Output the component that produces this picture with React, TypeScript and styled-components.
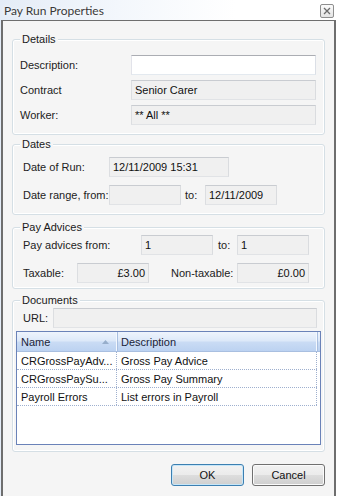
import styled, { createGlobalStyle } from "styled-components";

const GlobalStyle = createGlobalStyle`
  html, body {
    margin: 0;
    padding: 0;
    background: #ffffff;
  }
  body {
    font-family: "Liberation Sans", Arial, sans-serif;
    font-size: 11px;
    color: #1e1e1e;
  }
`;

const Window = styled.div`
  width: 337px;
  height: 496px;
  display: flex;
  flex-direction: column;
  box-sizing: border-box;
  background: linear-gradient(to right, #e4ecf7 0%, #f3f7fc 35%, #ffffff 70%);
`;

const TitleBar = styled.div`
  height: 20px;
  display: flex;
  align-items: center;
  justify-content: space-between;
  padding: 0 3px 0 4px;
`;

const Title = styled.span`
  font-family: Lato, "Liberation Sans", sans-serif;
  font-size: 12px;
  color: #3a3a3a;
  text-shadow: 0 0 4px #ffffff;
`;

const CloseBox = styled.div`
  width: 14px;
  height: 14px;
  box-sizing: border-box;
  border: 1px solid #8e8e8e;
  border-radius: 2px;
  background: linear-gradient(#fbfbfb, #e4e4e4);
  display: flex;
  align-items: center;
  justify-content: center;
  margin-top: 1px;
`;

const Frame = styled.div`
  flex: 1;
  margin: 0 1px;
  border: 2px solid #6e6e6e;
  border-top-width: 1px;
  border-bottom: none;
  background: #f5f5f5;
  padding: 11px 9px 0 9px;
  display: flex;
  flex-direction: column;
`;

const Group = styled.fieldset<{ $mt: number }>`
  margin: ${({ $mt }) => $mt}px 0 0;
  padding: 0;
  min-width: 0;
  border: 1px solid #d5dfe5;
  border-radius: 3px;
  box-shadow: inset 0 0 0 1px #ffffff;
`;

const Legend = styled.legend`
  margin-left: 7px;
  padding: 0 2px;
  font-size: 11px;
  line-height: 14px;
  color: #1a1a1a;
  background: #f5f5f5;
`;

const Content = styled.div<{ $pad: string; $gap: number }>`
  display: flex;
  flex-direction: column;
  gap: ${({ $gap }) => $gap}px;
  padding: ${({ $pad }) => $pad};
`;

const Row = styled.div`
  display: flex;
  align-items: center;
  height: 20px;
`;

const Label = styled.span<{ $w: number; $pl?: number }>`
  width: ${({ $w }) => $w}px;
  padding-left: ${({ $pl }) => $pl ?? 0}px;
  box-sizing: border-box;
  flex-shrink: 0;
  white-space: nowrap;
  color: #222222;
`;

const Field = styled.div<{ $w: number; $editable?: boolean; $right?: boolean }>`
  width: ${({ $w }) => $w}px;
  height: 20px;
  box-sizing: border-box;
  flex-shrink: 0;
  border: 1px solid;
  border-color: ${({ $editable }) =>
    $editable ? "#abadb3 #dbdfe6 #e3e9ef #e2e3ea" : "#c9ccd1 #dadcdf #e1e3e6 #dcdee1"};
  background: ${({ $editable }) => ($editable ? "#ffffff" : "#f0f0f0")};
  padding: 0 ${({ $right }) => ($right ? "3px" : "3px")};
  display: flex;
  align-items: center;
  justify-content: ${({ $right }) => ($right ? "flex-end" : "flex-start")};
  white-space: nowrap;
  overflow: hidden;
  color: #111111;
`;

const Grid = styled.div`
  margin-left: 3px;
  width: 305px;
  height: 114px;
  box-sizing: border-box;
  border: 1px solid #6a82b8;
  background: #ffffff;
`;

const HeadRow = styled.div`
  display: flex;
  height: 20px;
  box-sizing: border-box;
  background: linear-gradient(#eef4fd 0%, #dde9f9 45%, #c9dbf4 55%, #bcd2f1 100%);
  border-bottom: 1px solid #a9bfe0;
`;

const HeadCell = styled.div<{ $w: number }>`
  width: ${({ $w }) => $w}px;
  box-sizing: border-box;
  display: flex;
  align-items: center;
  justify-content: space-between;
  padding: 0 7px 0 4px;
  border-right: 1px solid #f4f8fe;
  box-shadow: 1px 0 0 #a9bfe0;
  color: #1b2438;
`;

const DataRow = styled.div`
  display: flex;
  height: 18px;
  box-sizing: border-box;
  border-bottom: 1px dotted #9fb0cf;
  width: 300px;
`;

const Cell = styled.div<{ $w: number }>`
  width: ${({ $w }) => $w}px;
  box-sizing: border-box;
  padding-left: 4px;
  display: flex;
  align-items: center;
  border-right: 1px dotted #9fb0cf;
  white-space: nowrap;
  overflow: hidden;
  color: #111111;
`;

const ButtonRow = styled.div`
  display: flex;
  justify-content: flex-end;
  gap: 8px;
  margin-top: 12px;
`;

const Button = styled.button<{ $default?: boolean }>`
  width: 73px;
  height: 22px;
  box-sizing: border-box;
  font-family: "Liberation Sans", Arial, sans-serif;
  font-size: 11px;
  color: #111111;
  border-radius: 3px;
  border: 1px solid ${({ $default }) => ($default ? "#3c7fb1" : "#707070")};
  box-shadow: inset 0 0 0 1px ${({ $default }) => ($default ? "#c6e6f8" : "#fbfbfb")};
  background: linear-gradient(#f2f2f2 0%, #ebebeb 50%, #dddddd 51%, #cfcfcf 100%);
  padding: 0;
`;

const docs = [
  { name: "CRGrossPayAdv...", desc: "Gross Pay Advice" },
  { name: "CRGrossPaySu...", desc: "Gross Pay Summary" },
  { name: "Payroll Errors", desc: "List errors in Payroll" },
];

export default function App() {
  return (
    <>
      <GlobalStyle />
      <Window>
        <TitleBar>
          <Title>Pay Run Properties</Title>
          <CloseBox>
            <svg width="8" height="8" viewBox="0 0 8 8">
              <path d="M1 1 L7 7 M7 1 L1 7" stroke="#6b6b6b" strokeWidth="1.3" />
            </svg>
          </CloseBox>
        </TitleBar>
        <Frame>
          <Group $mt={0}>
            <Legend>Details</Legend>
            <Content $pad="9px 0 9px 7px" $gap={5}>
              <Row>
                <Label $w={111}>Description:</Label>
                <Field $w={185} $editable />
              </Row>
              <Row>
                <Label $w={111}>Contract</Label>
                <Field $w={185}>Senior Carer</Field>
              </Row>
              <Row>
                <Label $w={111}>Worker:</Label>
                <Field $w={185}>** All **</Field>
              </Row>
            </Content>
          </Group>

          <Group $mt={2}>
            <Legend>Dates</Legend>
            <Content $pad="6px 0 9px 10px" $gap={8}>
              <Row>
                <Label $w={86}>Date of Run:</Label>
                <Field $w={120}>12/11/2009 15:31</Field>
              </Row>
              <Row>
                <Label $w={86}>Date range, from:</Label>
                <Field $w={72} />
                <Label $w={24} $pl={4}>to:</Label>
                <Field $w={72}>12/11/2009</Field>
              </Row>
            </Content>
          </Group>

          <Group $mt={5}>
            <Legend>Pay Advices</Legend>
            <Content $pad="1px 0 5px 10px" $gap={8}>
              <Row>
                <Label $w={118}>Pay advices from:</Label>
                <Field $w={72}>1</Field>
                <Label $w={24} $pl={5}>to:</Label>
                <Field $w={72}>1</Field>
              </Row>
              <Row>
                <Label $w={54}>Taxable:</Label>
                <Field $w={72} $right>£3.00</Field>
                <Label $w={88} $pl={22}>Non-taxable:</Label>
                <Field $w={72} $right>£0.00</Field>
              </Row>
            </Content>
          </Group>

          <Group $mt={4}>
            <Legend>Documents</Legend>
            <Content $pad="1px 0 6px 0" $gap={3}>
              <Row style={{ paddingLeft: 10 }}>
                <Label $w={30}>URL:</Label>
                <Field $w={264} />
              </Row>
              <Grid>
                <HeadRow>
                  <HeadCell $w={100}>
                    <span>Name</span>
                    <svg width="7" height="4" viewBox="0 0 7 4">
                      <path d="M0 4 L3.5 0 L7 4 Z" fill="#97aecb" />
                    </svg>
                  </HeadCell>
                  <HeadCell $w={200}>Description</HeadCell>
                </HeadRow>
                {docs.map((d) => (
                  <DataRow key={d.name}>
                    <Cell $w={100}>{d.name}</Cell>
                    <Cell $w={200}>{d.desc}</Cell>
                  </DataRow>
                ))}
              </Grid>
            </Content>
          </Group>

          <ButtonRow>
            <Button $default>OK</Button>
            <Button>Cancel</Button>
          </ButtonRow>
        </Frame>
      </Window>
    </>
  );
}
